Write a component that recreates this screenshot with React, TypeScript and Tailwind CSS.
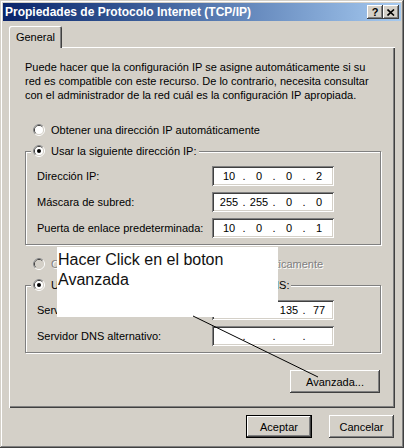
import React from "react";

const raised =
  "shadow-[inset_-1px_-1px_#404040,inset_1px_1px_#ffffff,inset_-2px_-2px_#808080]";
const sunken =
  "shadow-[inset_1px_1px_#808080,inset_-1px_-1px_#ffffff,inset_2px_2px_#404040,inset_-2px_-2px_#d4d0c8]";

function Radio({ checked = false, disabled = false }: { checked?: boolean; disabled?: boolean }) {
  return (
    <svg width="12" height="12" viewBox="0 0 12 12" className="shrink-0">
      <circle cx="6" cy="6" r="5.5" fill="none" stroke="#ffffff" />
      <path d="M2.1 9.9 A5.5 5.5 0 0 1 9.9 2.1" fill="none" stroke="#808080" />
      <circle cx="6" cy="6" r="4.5" fill="none" stroke="#d4d0c8" />
      <path d="M2.8 9.2 A4.5 4.5 0 0 1 9.2 2.8" fill="none" stroke="#404040" />
      <circle cx="6" cy="6" r="4" fill={disabled ? "#d4d0c8" : "#ffffff"} />
      {checked && <circle cx="6" cy="6" r="2" fill={disabled ? "#808080" : "#000000"} />}
    </svg>
  );
}

function RadioRow({
  label,
  checked,
  disabled,
}: {
  label: string;
  checked?: boolean;
  disabled?: boolean;
}) {
  return (
    <div className="flex items-center h-[14px]">
      <Radio checked={checked} disabled={disabled} />
      <span
        className={
          "ml-[6px] whitespace-nowrap " +
          (disabled ? "text-[#808080] [text-shadow:1px_1px_0_#ffffff]" : "text-black")
        }
      >
        {label}
      </span>
    </div>
  );
}

function IpBox({ parts }: { parts: string[] }) {
  return (
    <div className={`w-[122px] h-[20px] bg-white ${sunken} flex items-center pl-[6px]`}>
      {parts.map((p, i) => (
        <React.Fragment key={i}>
          {i > 0 && <span className="w-[8px] text-center">.</span>}
          <span className="w-[22px] text-center">{p}</span>
        </React.Fragment>
      ))}
    </div>
  );
}

function IpRow({ label, parts }: { label: string; parts: string[] }) {
  return (
    <div className="flex items-center h-[20px]">
      <span className="w-[175px] whitespace-nowrap">{label}</span>
      <IpBox parts={parts} />
    </div>
  );
}

function GroupBox({
  legend,
  children,
}: {
  legend: React.ReactNode;
  children: React.ReactNode;
}) {
  return (
    <fieldset className="w-[356px] border border-[#808080] shadow-[1px_1px_0_#ffffff,inset_1px_1px_0_#ffffff] pl-[5px] pb-[6px]">
      <legend className="px-[2px] bg-[#d4d0c8]">{legend}</legend>
      <div className="flex flex-col gap-[6px] pl-[6px] mt-[8px]">{children}</div>
    </fieldset>
  );
}

function Button({ label, primary = false, width }: { label: string; primary?: boolean; width: string }) {
  return (
    <div className={`${width} h-[23px] ${primary ? "border border-black" : ""}`}>
      <div className={`w-full h-full bg-[#d4d0c8] ${raised} flex items-center justify-center`}>
        {label}
      </div>
    </div>
  );
}

export default function App() {
  return (
    <div className="relative w-[404px] h-[448px] bg-[#d4d0c8] overflow-hidden shadow-[inset_-1px_-1px_#404040,inset_1px_1px_#d4d0c8,inset_-2px_-2px_#808080,inset_2px_2px_#ffffff] p-[3px] flex flex-col text-[11px] leading-[14px] text-black font-['Liberation_Sans',Arial,sans-serif]">
      {/* title bar */}
      <div className="h-[18px] bg-gradient-to-r from-[#0a246a] to-[#a6caf0] flex items-center pl-[2px] pr-[2px]">
        <span className="flex-1 text-white font-bold text-[12px] whitespace-nowrap">
          Propiedades de Protocolo Internet (TCP/IP)
        </span>
        <div className={`w-[16px] h-[14px] bg-[#d4d0c8] ${raised} flex items-center justify-center font-bold text-[11px] text-black`}>
          ?
        </div>
        <div className={`w-[16px] h-[14px] bg-[#d4d0c8] ${raised} flex items-center justify-center`}>
          <svg width="8" height="7" viewBox="0 0 8 7">
            <path d="M0.5 0.5 L7 6.5 M7 0.5 L0.5 6.5" stroke="#000" strokeWidth="1.6" />
          </svg>
        </div>
      </div>

      {/* tab strip */}
      <div className="pl-[6px] pt-[5px]">
        <div className="w-[53px] h-[22px] shadow-[inset_1px_1px_#ffffff,inset_-1px_0_#404040,inset_-2px_0_#808080] rounded-t-[2px] flex items-center justify-center relative z-10 bg-[#d4d0c8]">
          General
        </div>
      </div>

      {/* tab panel */}
      <div className="ml-[6px] -mt-[1px] w-[386px] h-[361px] shadow-[inset_1px_1px_#ffffff,inset_-1px_-1px_#404040,inset_-2px_-2px_#808080] pl-[16px] pr-[14px] pt-[13px] flex flex-col">
        <p className="w-[345px]">
          Puede hacer que la configuración IP se asigne automáticamente si su red es compatible con este recurso. De lo contrario, necesita consultar con el administrador de la red cuál es la configuración IP apropiada.
        </p>

        <div className="pl-[8px] mt-[21px]">
          <RadioRow label="Obtener una dirección IP automáticamente" />
        </div>

        <div className="mt-[7px]">
          <GroupBox legend={<RadioRow label="Usar la siguiente dirección IP:" checked />}>
            <IpRow label="Dirección IP:" parts={["10", "0", "0", "2"]} />
            <IpRow label="Máscara de subred:" parts={["255", "255", "0", "0"]} />
            <IpRow label="Puerta de enlace predeterminada:" parts={["10", "0", "0", "1"]} />
          </GroupBox>
        </div>

        <div className="pl-[8px] mt-[12px]">
          <RadioRow label="Obtener la dirección del servidor DNS automáticamente" disabled />
        </div>

        <div className="mt-[7px]">
          <GroupBox legend={<RadioRow label="Usar las siguientes direcciones de servidor DNS:" checked />}>
            <IpRow label="Servidor DNS preferido:" parts={["200", "42", "135", "77"]} />
            <IpRow label="Servidor DNS alternativo:" parts={["", "", "", ""]} />
          </GroupBox>
        </div>

        <div className="flex justify-end mt-[17px] pr-[1px]">
          <Button label="Avanzada..." width="w-[90px]" />
        </div>
      </div>

      {/* dialog buttons */}
      <div className="flex justify-end gap-[17px] mt-[7px] pr-[7px]">
        <Button label="Aceptar" primary width="w-[66px]" />
        <Button label="Cancelar" width="w-[65px]" />
      </div>

      {/* annotation */}
      <div className="absolute left-[57px] top-[247px] w-[221px] h-[70px] bg-white pl-[1px] pt-[3px] text-[16px] leading-[20px] text-[#111]">
        Hacer Click en el boton
        <br />
        Avanzada
      </div>
      <svg className="absolute left-0 top-0 pointer-events-none" width="404" height="448">
        <line x1="193" y1="316" x2="318" y2="377" stroke="#000" strokeWidth="1" />
      </svg>
    </div>
  );
}
